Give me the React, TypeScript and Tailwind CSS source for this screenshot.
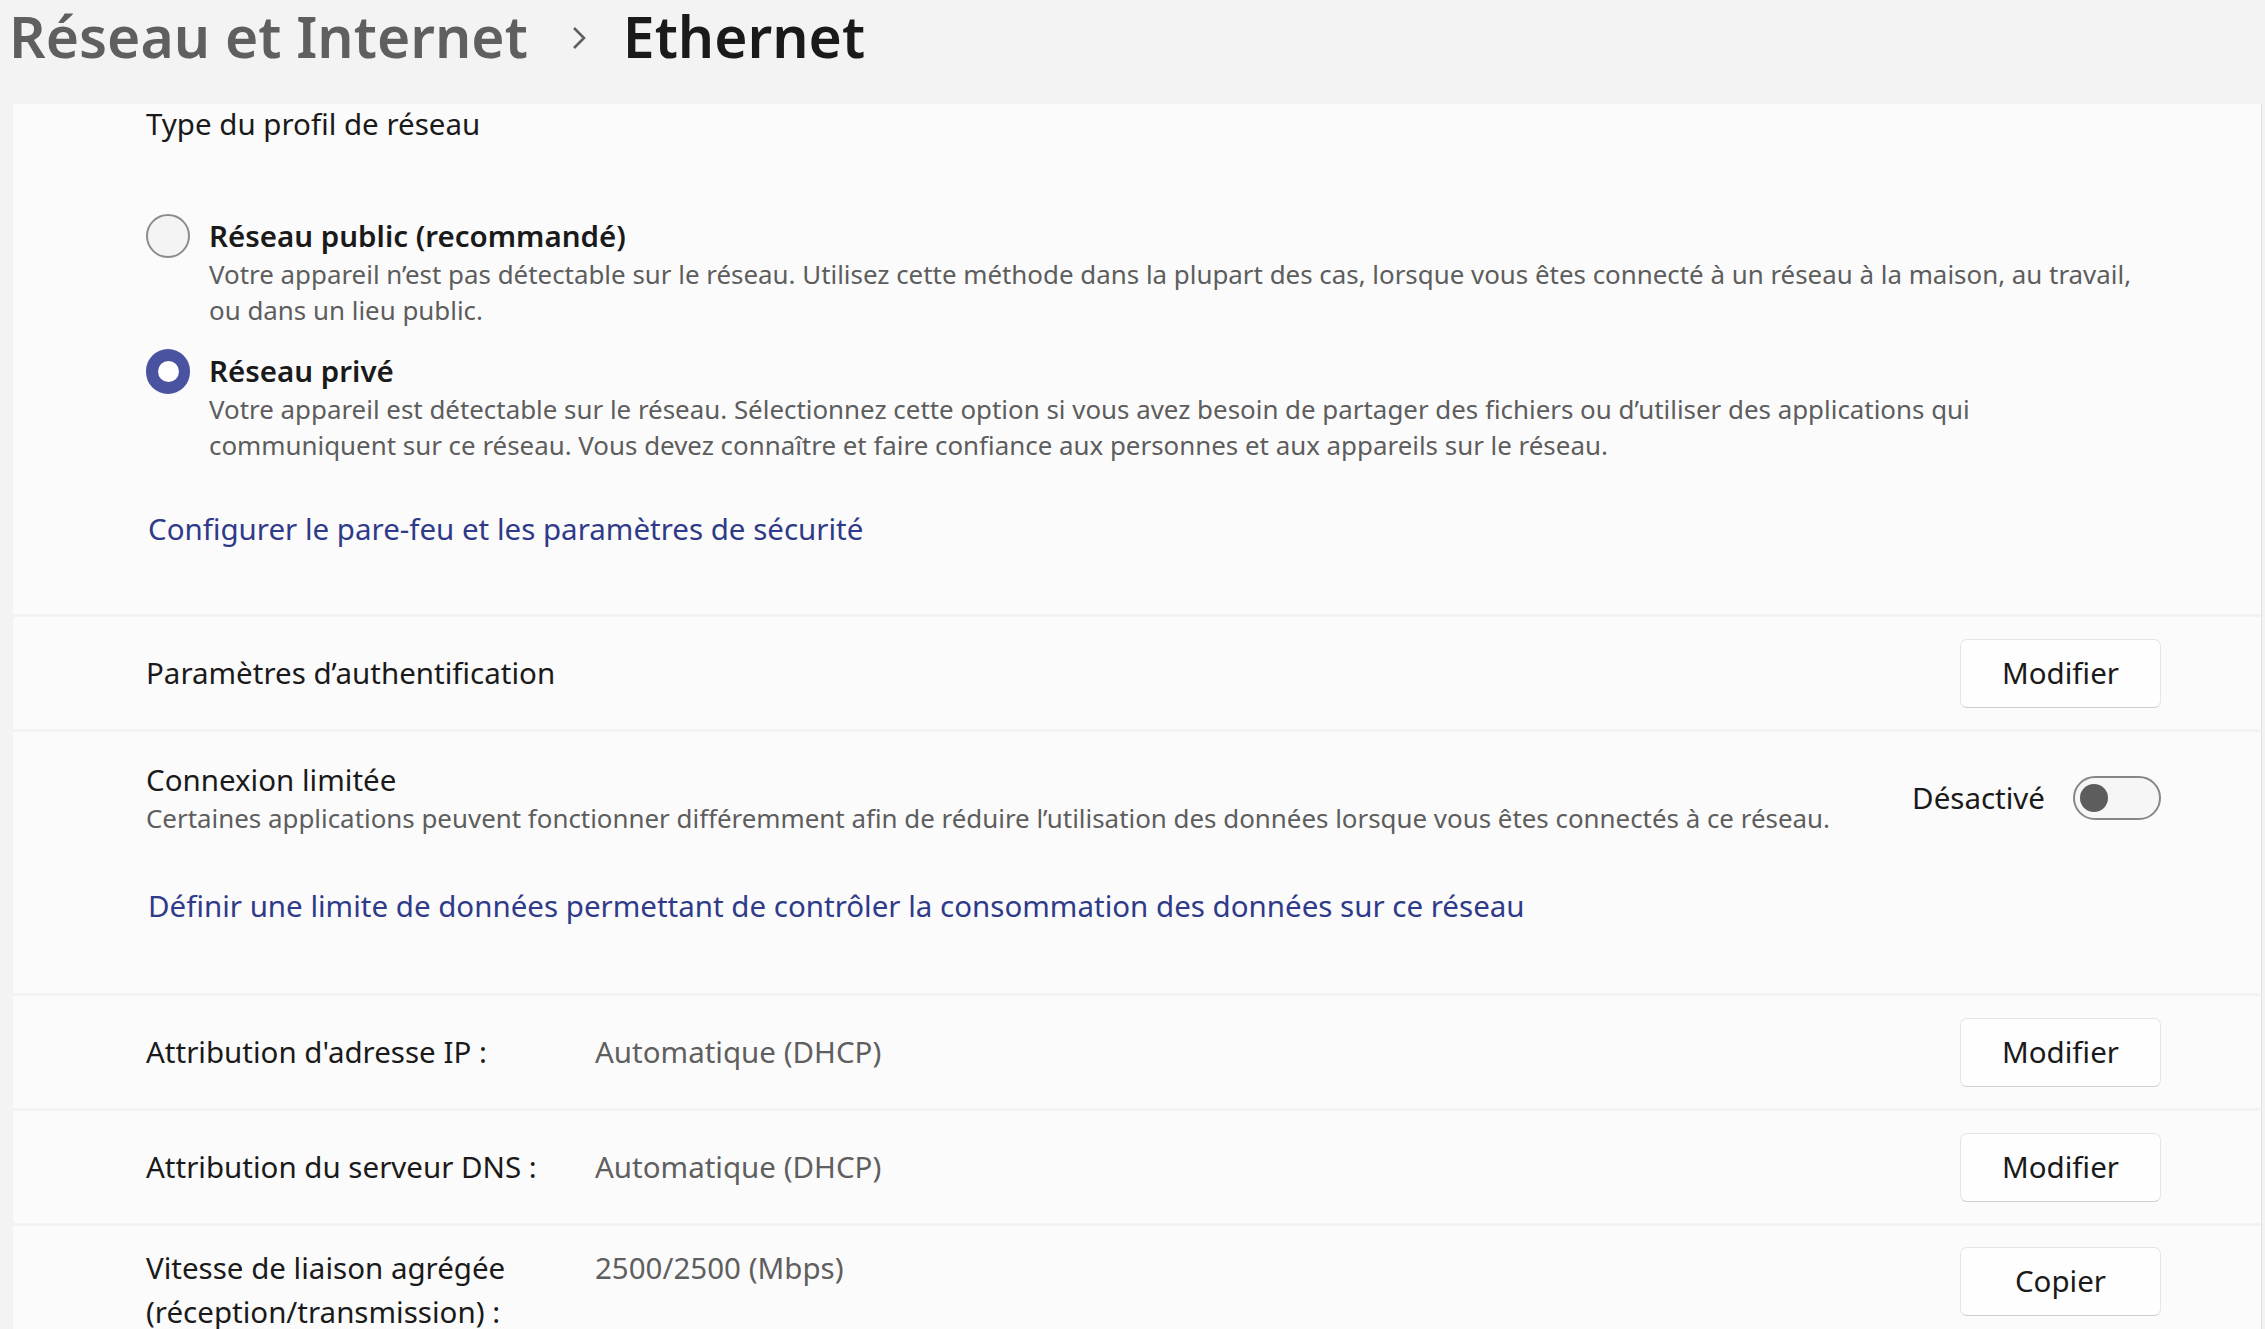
import React from "react";

const body = "text-[29.5px] leading-[40px] text-[#1a1a1a]";
const desc = "text-[25.9px] leading-[36px] text-[#5d5d5d] whitespace-nowrap";
const link = "ml-[2px] text-[29.5px] leading-[40px] text-[#2f3a89] whitespace-nowrap";

function Radio({ checked }: { checked?: boolean }) {
  return (
    <div className="h-[40px] w-[44px] shrink-0 flex items-center justify-center">
      {checked ? (
        <div className="h-[45px] w-[45px] rounded-full bg-[#4a53a0] flex items-center justify-center">
          <div className="h-[21px] w-[21px] rounded-full bg-white" />
        </div>
      ) : (
        <div className="h-[44px] w-[44px] rounded-full border-2 border-[#8c8c8c] bg-[#f4f4f4]" />
      )}
    </div>
  );
}

function Btn({ label }: { label: string }) {
  return (
    <button className="h-[69px] w-[201px] shrink-0 rounded-[7px] border border-[#e5e5e5] border-b-[#cfcfcf] bg-[#fefefe] text-[29.5px] text-[#1a1a1a]">
      {label}
    </button>
  );
}

function Toggle() {
  return (
    <div className="h-[44px] w-[88px] rounded-full border-2 border-[#878787] bg-[#f6f6f6] flex items-center pl-[5px]">
      <div className="h-[28px] w-[28px] rounded-full bg-[#5d5d5d]" />
    </div>
  );
}

function InfoRow({
  label,
  value,
  action,
}: {
  label: React.ReactNode;
  value: string;
  action: string;
}) {
  return (
    <div className="h-[112px] bg-[#fbfbfb] flex items-center pl-[133px] pr-[100px]">
      <div className={`w-[449px] shrink-0 ${body}`}>{label}</div>
      <div className="flex-1 text-[29.5px] leading-[40px] text-[#5f5f5f]">{value}</div>
      <Btn label={action} />
    </div>
  );
}

export default function App() {
  return (
    <div
      className="h-[1329px] overflow-hidden bg-[#f3f3f3]"
      style={{ fontFamily: '"Noto Sans", "Open Sans", sans-serif' }}
    >
      {/* breadcrumb */}
      <div className="h-[104px] flex items-start pl-[9px]">
        <div className="flex items-center h-[72px] leading-[72px] text-[57px] font-semibold">
          <span className="text-[#5f5f5f]">Réseau et Internet</span>
          <svg
            className="ml-[42px] mr-[35px] mt-[4px]"
            width="18"
            height="26"
            viewBox="0 0 18 26"
            fill="none"
          >
            <path d="M4 3 L14 13 L4 23" stroke="#5f5f5f" strokeWidth="2.6" />
          </svg>
          <span className="text-[#1a1a1a]">Ethernet</span>
        </div>
      </div>

      <div className="pl-[13px] pr-[3px]">
        <div className="flex flex-col gap-[3px] border-r border-[#e2e2e2]">
          {/* network profile */}
          <div className="h-[510px] bg-[#fbfbfb] pl-[133px]">
            <div className={`${body} leading-[34px]`}>Type du profil de réseau</div>

            <div className="mt-[72px] flex gap-[19px]">
              <Radio />
              <div>
                <div className={`${body} font-semibold`}>Réseau public (recommandé)</div>
                <div className={desc}>
                  Votre appareil n’est pas détectable sur le réseau. Utilisez cette méthode dans la
                  plupart des cas, lorsque vous êtes connecté à un réseau à la maison, au travail,
                  <br />
                  ou dans un lieu public.
                </div>
              </div>
            </div>

            <div className="mt-[23px] flex gap-[19px]">
              <Radio checked />
              <div>
                <div className={`${body} font-semibold`}>Réseau privé</div>
                <div className={desc}>
                  Votre appareil est détectable sur le réseau. Sélectionnez cette option si vous avez
                  besoin de partager des fichiers ou d’utiliser des applications qui
                  <br />
                  communiquent sur ce réseau. Vous devez connaître et faire confiance aux personnes et
                  aux appareils sur le réseau.
                </div>
              </div>
            </div>

            <div className={`mt-[46px] ${link}`}>
              Configurer le pare-feu et les paramètres de sécurité
            </div>
          </div>

          {/* authentication */}
          <div className="h-[112px] bg-[#fbfbfb] flex items-center justify-between pl-[133px] pr-[100px]">
            <div className={body}>Paramètres d’authentification</div>
            <Btn label="Modifier" />
          </div>

          {/* metered */}
          <div className="h-[261px] bg-[#fbfbfb] pl-[133px] pr-[100px] pt-[28px]">
            <div className="flex items-center justify-between">
              <div>
                <div className={body}>Connexion limitée</div>
                <div className={desc}>
                  Certaines applications peuvent fonctionner différemment afin de réduire
                  l’utilisation des données lorsque vous êtes connectés à ce réseau.
                </div>
              </div>
              <div className="flex items-center gap-[28px]">
                <span className="text-[29.5px] text-[#1a1a1a]">Désactivé</span>
                <Toggle />
              </div>
            </div>
            <div className={`mt-[50px] ${link}`}>
              Définir une limite de données permettant de contrôler la consommation des données sur
              ce réseau
            </div>
          </div>

          <InfoRow label="Attribution d'adresse IP :" value="Automatique (DHCP)" action="Modifier" />
          <InfoRow label="Attribution du serveur DNS :" value="Automatique (DHCP)" action="Modifier" />

          {/* link speed */}
          <div className="h-[140px] bg-[#fbfbfb] flex items-start pl-[133px] pr-[100px] pt-[20px]">
            <div className="w-[449px] shrink-0 text-[29.5px] leading-[44px] text-[#1a1a1a]">
              Vitesse de liaison agrégée
              <br />
              (réception/transmission) :
            </div>
            <div className="flex-1 text-[29.5px] leading-[44px] text-[#5f5f5f]">
              2500/2500 (Mbps)
            </div>
            <div className="mt-[1px]">
              <Btn label="Copier" />
            </div>
          </div>
        </div>
      </div>
    </div>
  );
}
